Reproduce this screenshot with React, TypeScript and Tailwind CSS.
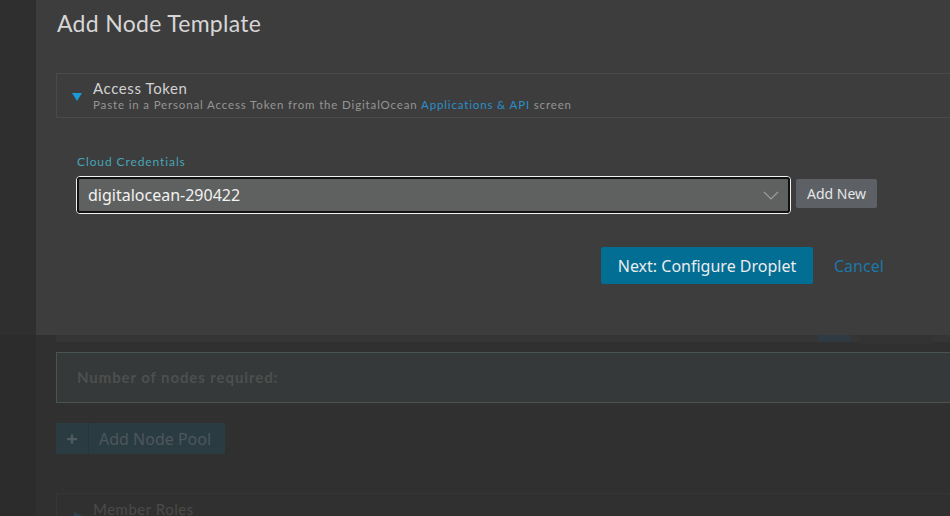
import React from "react";

const prompt = { fontFamily: "Lato, 'Noto Sans', sans-serif" };
const noto = { fontFamily: "'Noto Sans', sans-serif" };

function Backdrop() {
  return (
    <div className="flex flex-col pl-[56px]">
      <div className="flex h-[7px] bg-[#353535]">
        <div className="w-[762px]" />
        <div className="w-[32px] bg-[#2f3a42]" />
        <div className="w-[10px]" />
        <div className="w-[73px] h-[9px] bg-[#333333]" />
      </div>
      <div className="h-[10px]" />
      <div className="h-[51px] shrink-0 border border-r-0 border-[#4a5550] bg-[#353939] flex items-center pl-[20px]">
        <span className="text-[15px] font-bold text-[#4e4f4f] tracking-[0.9px]" style={prompt}>
          Number of nodes required:
        </span>
      </div>
      <div className="h-[20px]" />
      <div className="flex w-[169px] h-[31px] bg-[#2b3b42]">
        <div className="w-[33px] flex items-center justify-center border-r border-[#28353b] text-[#4f5b5f] text-[20px] font-bold">
          +
        </div>
        <div className="flex items-center pl-[10px] text-[16px] text-[#4b575c]" style={noto}>
          Add Node Pool
        </div>
      </div>
      <div className="h-[39px]" />
      <div className="h-[40px] border-t border-l border-[#363636] flex pl-[17px] pt-[6px]">
        <svg width="9" height="8" viewBox="0 0 9 8" className="mt-[12px] mr-[10px]">
          <polygon points="0,0 9,4 0,8" fill="#2a4350" />
        </svg>
        <span className="text-[15px] text-[#4a4a4a] leading-[18px] tracking-[0.5px]" style={prompt}>
          Member Roles
        </span>
      </div>
    </div>
  );
}

function Modal() {
  return (
    <div className="h-[335px] shrink-0 bg-[#3d3d3d] flex flex-col pl-[20px] pt-[9px]">
      <h1 className="text-[23px] leading-[28px] text-[#d6d6d6] ml-[1px] tracking-[0.3px]" style={prompt}>
        Add Node Template
      </h1>
      <div className="mt-[36px] h-[45px] border border-r-0 border-[#4a4a4a] flex items-start pl-[15px]">
        <svg width="10" height="8" viewBox="0 0 10 8" className="mt-[19px] mr-[11px]">
          <polygon points="0,0 10,0 5,8" fill="#1a9ad6" />
        </svg>
        <div className="flex flex-col pt-[5px]">
          <span className="text-[15px] leading-[18px] text-[#d2d2d2] tracking-[0.6px]" style={prompt}>
            Access Token
          </span>
          <span className="text-[11.5px] leading-[14px] text-[#959595] tracking-[0.85px] mt-[1px]" style={prompt}>
            Paste in a Personal Access Token from the DigitalOcean{" "}
            <span className="text-[#2b8fc9]">Applications &amp; API</span> screen
          </span>
        </div>
      </div>
      <div className="pl-[20px] pt-[36px]">
        <div className="text-[12px] leading-[15px] text-[#47a6b6] tracking-[0.9px] ml-[1px]" style={prompt}>
          Cloud Credentials
        </div>
        <div className="flex items-start mt-[7px]">
          <div className="w-[715px] h-[38px] shrink-0 rounded-[4px] border border-[#f2f2f2]">
            <div className="h-full rounded-[3px] border-2 border-[#111111] bg-[#5f6160] flex items-center justify-between pl-[9px] pr-[9px]">
              <span className="text-[16px] text-[#f2f2f2]" style={noto}>
                digitalocean-290422
              </span>
              <svg width="16" height="9" viewBox="0 0 16 9">
                <polyline points="1,1 8,8 15,1" fill="none" stroke="#9c9c9c" strokeWidth="1.2" />
              </svg>
            </div>
          </div>
          <button
            className="ml-[5px] mt-[3px] w-[81px] h-[29px] bg-[#5d6166] rounded-[2px] text-[14px] leading-[29px] text-[#e6e6e6]"
            style={noto}
          >
            Add New
          </button>
        </div>
        <div className="flex items-center mt-[33px] pl-[525px]">
          <button
            className="w-[212px] h-[37px] bg-[#026e94] rounded-[2px] text-[16px] text-[#ececec]"
            style={noto}
          >
            Next: Configure Droplet
          </button>
          <span className="ml-[21px] text-[16px] text-[#1c77a8]" style={noto}>
            Cancel
          </span>
        </div>
      </div>
    </div>
  );
}

export default function App() {
  return (
    <div className="w-[950px] h-[516px] overflow-hidden bg-[#303030] flex">
      <div className="w-[36px] shrink-0 flex flex-col">
        <div className="h-[335px] shrink-0 bg-[#2f2f2f]" />
        <div className="flex-1 bg-[#2c2c2c]" />
      </div>
      <div className="flex-1 flex flex-col">
        <Modal />
        <div className="-ml-[36px]">
          <Backdrop />
        </div>
      </div>
    </div>
  );
}
